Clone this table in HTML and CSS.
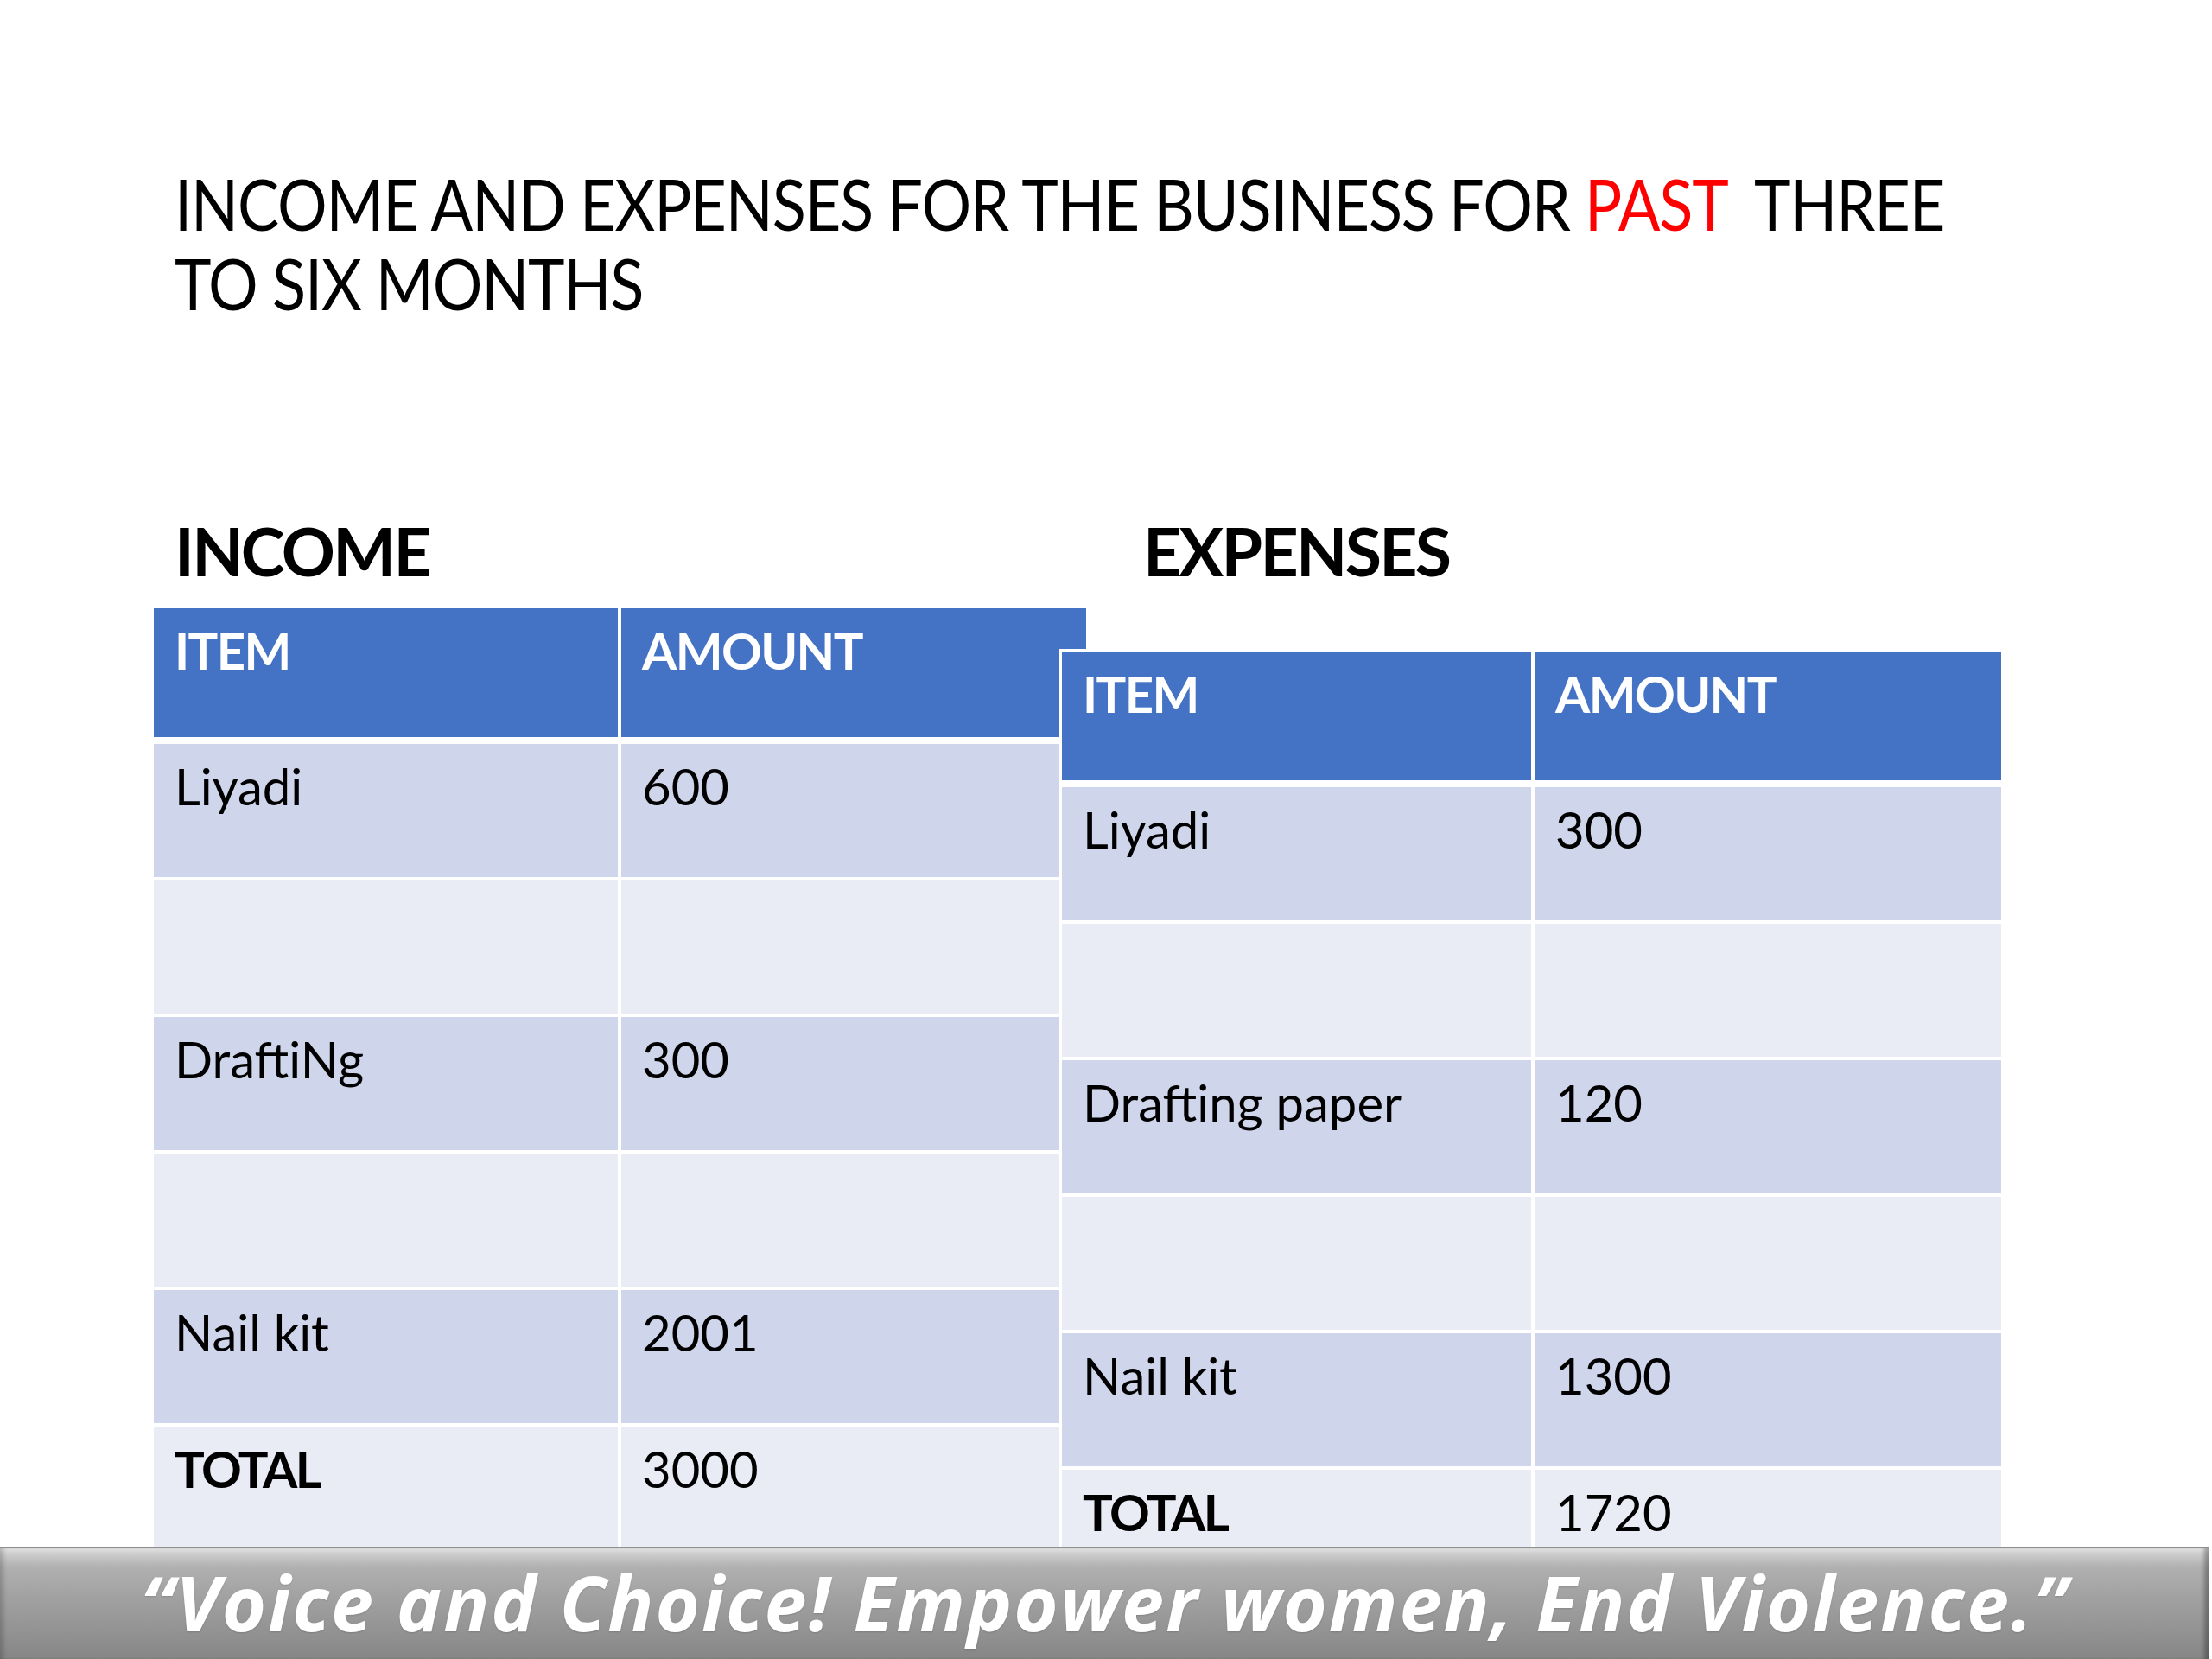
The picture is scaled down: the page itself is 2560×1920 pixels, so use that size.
FILE: index.html
```html
<!DOCTYPE html>
<html lang="en">
<head>
<meta charset="utf-8">
<title>Income and Expenses</title>
<link rel="stylesheet" href="styles.css">
</head>
<body>
<div class="page">
  <h1 class="title"><span class="title-text">INCOME AND EXPENSES FOR THE BUSINESS FOR <span class="red">PAST</span>&nbsp; THREE<br>TO SIX MONTHS</span></h1>

  <div class="tables">
    <section class="col col-income">
      <h2 class="heading">INCOME</h2>
      <div class="table table-income">
        <div class="cell head">ITEM</div><div class="cell head">AMOUNT</div>
        <div class="cell odd">Liyadi</div><div class="cell odd">600</div>
        <div class="cell even"></div><div class="cell even"></div>
        <div class="cell odd">DraftiNg</div><div class="cell odd">300</div>
        <div class="cell even"></div><div class="cell even"></div>
        <div class="cell odd">Nail kit</div><div class="cell odd">2001</div>
        <div class="cell even bold">TOTAL</div><div class="cell even">3000</div>
      </div>
    </section>

    <section class="col col-expenses">
      <h2 class="heading heading-expenses">EXPENSES</h2>
      <div class="table table-expenses">
        <div class="cell head">ITEM</div><div class="cell head">AMOUNT</div>
        <div class="cell odd">Liyadi</div><div class="cell odd">300</div>
        <div class="cell even"></div><div class="cell even"></div>
        <div class="cell odd">Drafting paper</div><div class="cell odd">120</div>
        <div class="cell even"></div><div class="cell even"></div>
        <div class="cell odd">Nail kit</div><div class="cell odd">1300</div>
        <div class="cell even bold">TOTAL</div><div class="cell even">1720</div>
      </div>
    </section>
  </div>

  <footer class="banner">“Voice and Choice! Empower women, End Violence.”</footer>
</div>
</body>
</html>
```

FILE: styles.css
```css
html, body {
  margin: 0;
  padding: 0;
  background: #ffffff;
}

.page {
  position: relative;
  width: 2560px;
  height: 1920px;
  overflow: hidden;
  background: #ffffff;
  font-family: Lato, "Open Sans", "Liberation Sans", sans-serif;
  color: #000000;
}

.title {
  margin: 0;
  padding: 190px 0 0 202px;
  height: 184px;
  font-size: 81px;
  font-weight: 400;
  line-height: 92px;
  white-space: nowrap;
}

.title-text {
  display: inline-block;
  letter-spacing: -1.3px;
  transform: scaleX(0.89);
  transform-origin: left top;
}

.red {
  color: #ff0000;
}

.tables {
  display: flex;
  align-items: flex-start;
  margin-top: 217px;
  padding-left: 178px;
}

.col-income {
  width: 1079px;
}

.col-expenses {
  width: 1087px;
  margin-left: -28px;
}

.heading {
  margin: 0;
  padding-left: 24px;
  font-size: 77px;
  font-weight: 700;
  line-height: 92px;
  letter-spacing: -2.7px;
}

.heading-expenses {
  padding-left: 94px;
}

.table {
  display: grid;
  gap: 4px;
  background: #ffffff;
}

.table-income {
  margin-top: 21px;
  grid-template-columns: 537px 538px;
}

.table-expenses {
  margin-top: 71px;
  grid-template-columns: 543px 540px;
  outline: 3px solid #ffffff;
}

.cell {
  height: 154px;
  box-sizing: border-box;
  padding: 15px 0 0 24px;
  font-size: 58px;
  line-height: 68px;
}

.head {
  height: 149px;
  margin-bottom: 4px;
  background: #4472c4;
  color: #ffffff;
  font-weight: 700;
  letter-spacing: -1.6px;
}

.odd {
  background: #cfd5ea;
}

.even {
  background: #e9ebf5;
}

.bold {
  font-weight: 700;
  letter-spacing: -2.5px;
}

.banner {
  position: absolute;
  left: 0;
  bottom: 0;
  width: 2557px;
  height: 130px;
  box-sizing: border-box;
  padding-top: 16px;
  border-top: 2px solid #8e8e8e;
  background: linear-gradient(to bottom, #e4e4e4 0px, #cdcdcd 6px, #b0b0b0 22px, #a2a2a2 55px, #939393 95px, #858585 130px);
  box-shadow: inset 7px 0 5px -3px rgba(0, 0, 0, 0.18), inset -9px 0 5px -3px rgba(0, 0, 0, 0.3);
  color: #ffffff;
  font-family: "Open Sans", Lato, "Liberation Sans", sans-serif;
  font-size: 88px;
  font-weight: 700;
  font-style: italic;
  line-height: 92px;
  letter-spacing: 2px;
  text-align: center;
  white-space: nowrap;
  text-shadow: 0 1px 2px rgba(0, 0, 0, 0.15);
}
```
